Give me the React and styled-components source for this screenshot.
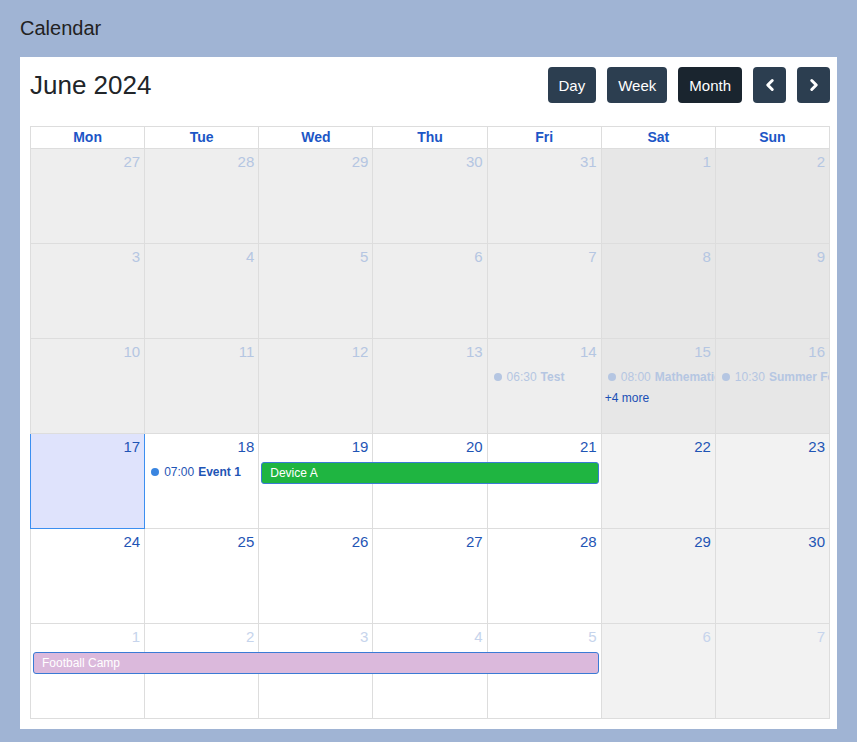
import React from 'react';
import styled, { createGlobalStyle } from 'styled-components';
import { ChevronLeft, ChevronRight } from 'lucide-react';

const GlobalStyle = createGlobalStyle`
  * { box-sizing: border-box; }
  body {
    margin: 0;
    background: #a0b4d4;
    font-family: "Liberation Sans", Arial, sans-serif;
  }
`;

const DAYS = ['Mon', 'Tue', 'Wed', 'Thu', 'Fri', 'Sat', 'Sun'];

// kind: past | cur | next
const weeks = [
  { days: [27, 28, 29, 30, 31, 1, 2], kind: 'past' },
  { days: [3, 4, 5, 6, 7, 8, 9], kind: 'past' },
  {
    days: [10, 11, 12, 13, 14, 15, 16],
    kind: 'past',
    dots: [
      { col: 5, time: '06:30', title: 'Test' },
      { col: 6, time: '08:00', title: 'Mathematics' },
      { col: 7, time: '10:30', title: 'Summer Festival' },
    ],
    more: { col: 6, text: '+4 more' },
  },
  {
    days: [17, 18, 19, 20, 21, 22, 23],
    kind: 'cur',
    today: 0,
    dots: [{ col: 2, time: '07:00', title: 'Event 1' }],
    bars: [{ start: 3, end: 5, title: 'Device A', bg: '#1fb541' }],
  },
  { days: [24, 25, 26, 27, 28, 29, 30], kind: 'cur' },
  {
    days: [1, 2, 3, 4, 5, 6, 7],
    kind: 'next',
    bars: [{ start: 1, end: 5, title: 'Football Camp', bg: '#dbb9dc' }],
  },
];

const cellBg = (kind, i, today) => {
  if (today) return '#dfe3fc';
  const weekend = i >= 5;
  if (kind === 'past') return weekend ? '#e7e7e7' : '#eeeeee';
  return weekend ? '#f2f2f2' : '#ffffff';
};

const numColor = kind =>
  kind === 'past' ? '#b5c6e2' : kind === 'next' ? '#c6d4ec' : '#1f55b5';

export default function App() {
  return (
    <Page>
      <GlobalStyle />
      <PageTitle>Calendar</PageTitle>
      <Panel>
        <Toolbar>
          <MonthTitle>June 2024</MonthTitle>
          <Buttons>
            <Btn>Day</Btn>
            <Btn>Week</Btn>
            <Btn $active>Month</Btn>
            <IconBtn>
              <ChevronLeft size={18} strokeWidth={4} />
            </IconBtn>
            <IconBtn>
              <ChevronRight size={18} strokeWidth={4} />
            </IconBtn>
          </Buttons>
        </Toolbar>
        <Table>
          <HeadRow>
            {DAYS.map(d => (
              <HeadCell key={d}>{d}</HeadCell>
            ))}
          </HeadRow>
          {weeks.map((w, wi) => (
            <Week key={wi}>
              {w.days.map((d, i) => (
                <Cell
                  key={i}
                  $col={i + 1}
                  $bg={cellBg(w.kind, i, w.today === i)}
                  $today={w.today === i}
                >
                  <DayNum $color={numColor(w.kind)}>{d}</DayNum>
                </Cell>
              ))}
              {(w.dots || []).map((e, i) => (
                <DotEvent key={'d' + i} $col={e.col} $past={w.kind === 'past'}>
                  <Dot $past={w.kind === 'past'} />
                  <span>{e.time}</span>
                  <b>{e.title}</b>
                </DotEvent>
              ))}
              {(w.bars || []).map((b, i) => (
                <Bar key={'b' + i} $start={b.start} $end={b.end} $bg={b.bg}>
                  {b.title}
                </Bar>
              ))}
              {w.more && <More $col={w.more.col}>{w.more.text}</More>}
            </Week>
          ))}
        </Table>
      </Panel>
    </Page>
  );
}

const Page = styled.div`
  min-height: 742px;
  padding: 14px 20px 14px 20px;
`;

const PageTitle = styled.div`
  font-size: 20px;
  line-height: 28px;
  color: #222;
  margin-bottom: 15px;
`;

const Panel = styled.div`
  background: #fff;
  padding: 10px 7px 10px 10px;
`;

const Toolbar = styled.div`
  display: flex;
  align-items: center;
  justify-content: space-between;
  height: 36px;
  margin-bottom: 23px;
`;

const MonthTitle = styled.h2`
  margin: 0;
  font-size: 26px;
  font-weight: 400;
  color: #212529;
`;

const Buttons = styled.div`
  display: flex;
  gap: 11px;
`;

const Btn = styled.button`
  height: 36px;
  padding: 0 11px;
  border: none;
  border-radius: 4px;
  background: ${({ $active }) => ($active ? '#1a252f' : '#2c3e50')};
  color: #fff;
  font-family: inherit;
  font-size: 15px;
`;

const IconBtn = styled(Btn)`
  width: 33px;
  padding: 0;
  display: flex;
  align-items: center;
  justify-content: center;
`;

const Table = styled.div`
  border-top: 1px solid #dddddd;
  border-left: 1px solid #dddddd;
`;

const HeadRow = styled.div`
  display: grid;
  grid-template-columns: repeat(7, 1fr);
`;

const HeadCell = styled.div`
  height: 22px;
  line-height: 21px;
  text-align: center;
  font-size: 14px;
  font-weight: 700;
  color: #1c56c6;
  border-right: 1px solid #dddddd;
  border-bottom: 1px solid #dddddd;
`;

const Week = styled.div`
  display: grid;
  grid-template-columns: repeat(7, 1fr);
  grid-template-rows: 28px 22px 20px 1fr;
  height: 95px;
`;

const Cell = styled.div`
  grid-column: ${({ $col }) => $col};
  grid-row: 1 / -1;
  background: ${({ $bg }) => $bg};
  border-right: 1px solid ${({ $today }) => ($today ? '#3b8ff0' : '#dddddd')};
  border-bottom: 1px solid ${({ $today }) => ($today ? '#3b8ff0' : '#dddddd')};
  box-shadow: ${({ $today }) => ($today ? 'inset 1px 0 0 #3b8ff0' : 'none')};
  margin-left: ${({ $today }) => ($today ? '-1px' : '0')};
`;

const DayNum = styled.div`
  text-align: right;
  padding: 4px 4px 0 0;
  font-size: 15px;
  line-height: 18px;
  color: ${({ $color }) => $color};
`;

const DotEvent = styled.div`
  grid-column: ${({ $col }) => $col};
  grid-row: 2;
  z-index: 1;
  display: flex;
  align-items: center;
  gap: 4px;
  padding: 0 4px 0 6px;
  margin-right: 1px;
  margin-top: -2px;
  overflow: hidden;
  white-space: nowrap;
  font-size: 12px;
  color: ${({ $past }) => ($past ? '#b5c6e2' : '#1f55b5')};

  b {
    font-weight: 700;
  }
`;

const Dot = styled.span`
  flex: none;
  width: 8px;
  height: 8px;
  border-radius: 50%;
  margin-right: 1px;
  background: ${({ $past }) => ($past ? '#b5c6e2' : '#3a85e0')};
`;

const Bar = styled.div`
  grid-column: ${({ $start, $end }) => `${$start} / ${$end + 1}`};
  grid-row: 2;
  z-index: 1;
  margin: 0 3px 0 2px;
  height: 22px;
  line-height: 20px;
  padding-left: 8px;
  border: 1px solid #3a7bd5;
  border-radius: 3px;
  background: ${({ $bg }) => $bg};
  color: #fff;
  font-size: 12px;
  white-space: nowrap;
  overflow: hidden;
`;

const More = styled.div`
  grid-column: ${({ $col }) => $col};
  grid-row: 3;
  z-index: 1;
  padding-left: 3px;
  font-size: 12px;
  line-height: 18px;
  color: #1a4fb5;
`;
